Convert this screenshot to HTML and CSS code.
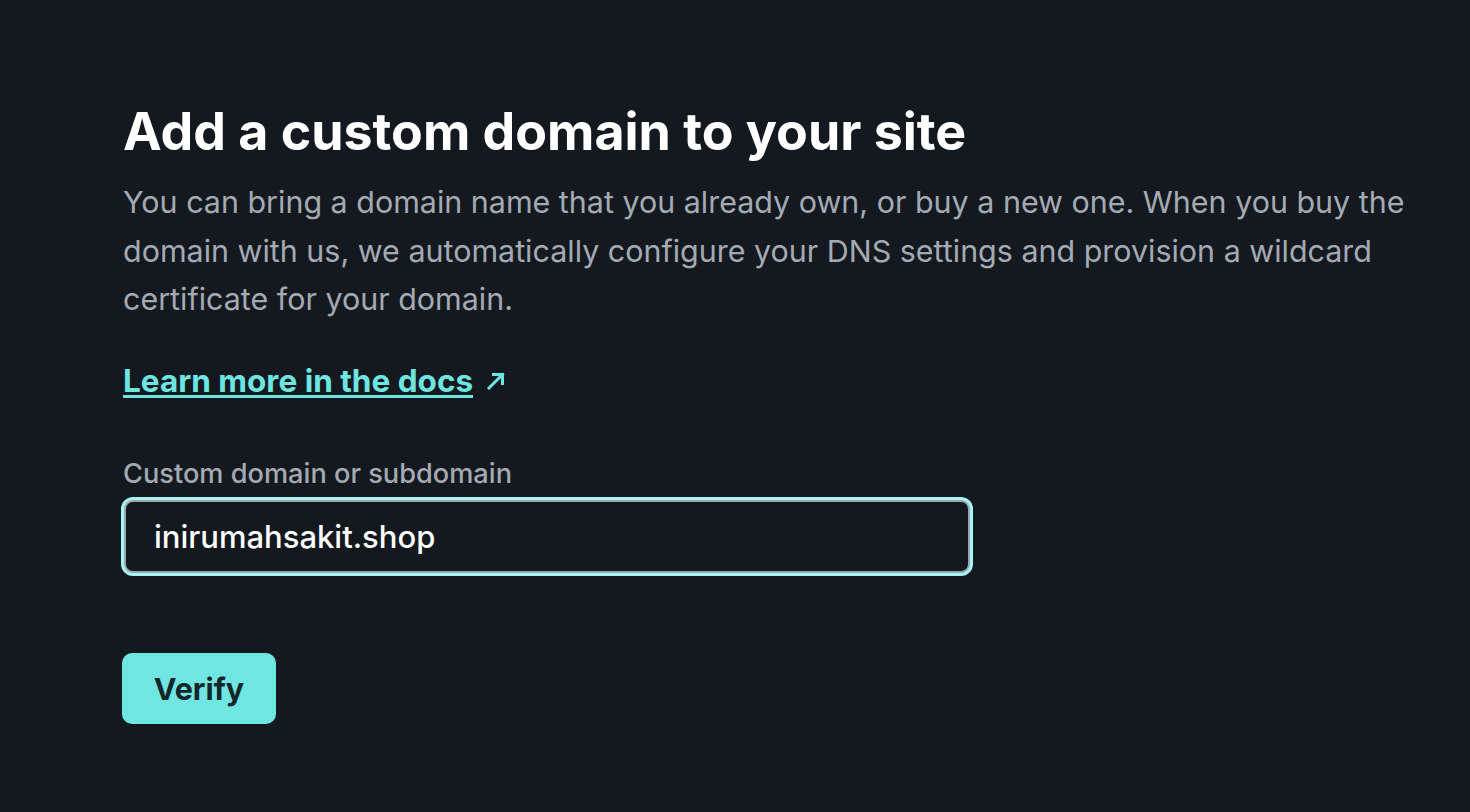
FILE: index.html
```html
<!DOCTYPE html>
<html lang="en">
<head>
<meta charset="utf-8">
<title>Add a custom domain</title>
<link rel="stylesheet" href="styles.css">
</head>
<body>
<main class="page">
  <h1 class="title">Add a custom domain to your site</h1>
  <p class="lead">You can bring a domain name that you already own, or buy a new one. When you buy the domain with us, we automatically configure your DNS settings and provision a wildcard certificate for your domain.</p>
  <p class="docs"><a class="docs-link" href="#">Learn more in the docs</a><svg class="arrow" width="20" height="18" viewBox="0 0 20 18" aria-hidden="true"><path d="M3 16 L16.5 2.5 M7.5 2.5 H16.5 V11.5" fill="none" stroke="currentColor" stroke-width="3" stroke-linecap="square" stroke-linejoin="miter"/></svg></p>
  <form class="form">
    <label class="label" for="domain">Custom domain or subdomain</label>
    <input id="domain" class="input" type="text" value="inirumahsakit.shop">
    <button class="btn" type="button">Verify</button>
  </form>
</main>
</body>
</html>
```

FILE: styles.css
```css
html, body {
  margin: 0;
  background: #141920;
}
body {
  font-family: Inter, "Noto Sans", sans-serif;
  color: #a5abb3;
}
.page {
  padding: 102px 0 0 123px;
  max-width: 1300px;
}
.title {
  margin: 0;
  font-size: 51.9px;
  line-height: 60px;
  font-weight: 700;
  color: #ffffff;
}
.lead {
  margin: 16px 0 0;
  font-size: 30.45px;
  line-height: 48.5px;
  color: #a4aab3;
}
.docs {
  margin: 33px 0 0;
  font-size: 31.5px;
  line-height: 48px;
  display: flex;
  align-items: center;
  gap: 13px;
  color: #6ee5e0;
}
.docs-link {
  color: #6ee5e0;
  font-weight: 700;
  text-decoration: underline;
  text-decoration-thickness: 3px;
  text-underline-offset: 3px;
}
.arrow {
  color: #6ee5e0;
  flex: none;
}
.form {
  margin-top: 51px;
  display: flex;
  flex-direction: column;
  align-items: flex-start;
}
.label {
  font-size: 27.2px;
  line-height: 36px;
  color: #a4aab3;
  font-weight: 500;
}
.input {
  display: block;
  box-sizing: border-box;
  margin: 8px 0 0 1px;
  width: 846px;
  height: 73px;
  border: 2px solid #9ea4ab;
  border-radius: 9px;
  box-shadow: 0 0 0 3px #a6f4f4;
  background: #141920;
  color: #ffffff;
  font-family: Inter, "Noto Sans", sans-serif;
  font-size: 31px;
  font-weight: 500;
  padding: 0 28px;
  outline: none;
}
.btn {
  margin-top: 80px;
  margin-left: -1px;
  width: 154px;
  height: 71px;
  border: none;
  border-radius: 10px;
  background: #6fe6e1;
  color: #13262a;
  font-family: Inter, "Noto Sans", sans-serif;
  font-size: 30.5px;
  font-weight: 700;
  cursor: pointer;
}
```
